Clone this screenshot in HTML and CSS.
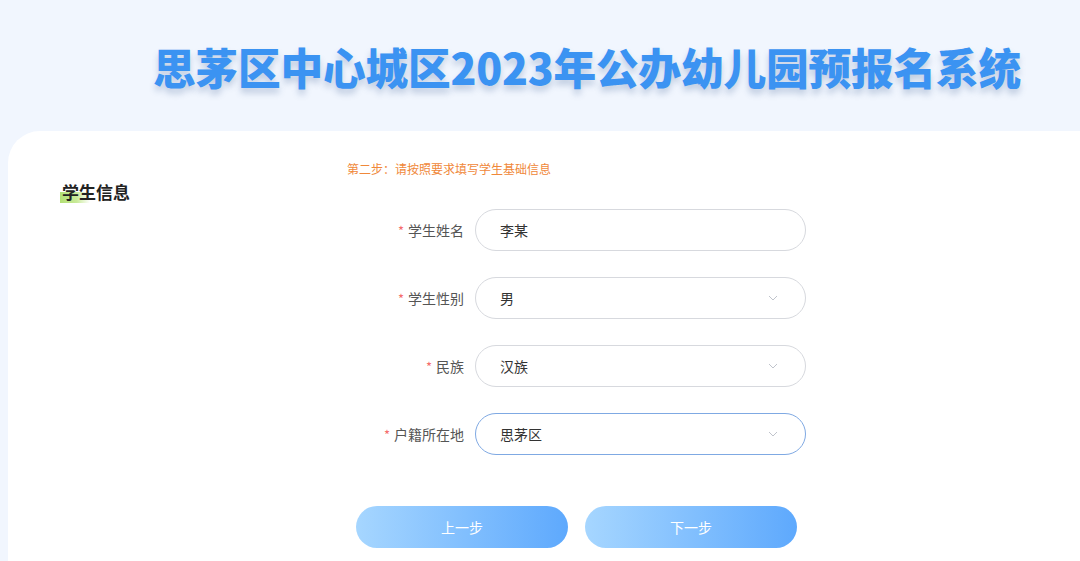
FILE: index.html
```html
<!DOCTYPE html>
<html lang="zh-CN">
<head>
<meta charset="utf-8">
<title>思茅区中心城区2023年公办幼儿园预报名系统</title>
<link rel="stylesheet" href="styles.css">
</head>
<body>
<div class="page">
  <header class="header">
    <h1 class="title">思茅区中心城区2023年公办幼儿园预报名系统</h1>
  </header>
  <main class="card">
    <aside class="aside">
      <h2 class="section-title"><span class="mark">学生</span>信息</h2>
    </aside>
    <section class="form">
      <p class="hint">第二步：请按照要求填写学生基础信息</p>
      <div class="row">
        <label class="label"><span class="req">*</span>学生姓名</label>
        <div class="field"><span class="value">李某</span></div>
      </div>
      <div class="row">
        <label class="label"><span class="req">*</span>学生性别</label>
        <div class="field"><span class="value">男</span>
          <svg class="arrow" width="10" height="6" viewBox="0 0 10 6"><path d="M1 1 L5 5 L9 1" fill="none" stroke="#c0c4cc" stroke-width="1"/></svg>
        </div>
      </div>
      <div class="row">
        <label class="label"><span class="req">*</span>民族</label>
        <div class="field"><span class="value">汉族</span>
          <svg class="arrow" width="10" height="6" viewBox="0 0 10 6"><path d="M1 1 L5 5 L9 1" fill="none" stroke="#c0c4cc" stroke-width="1"/></svg>
        </div>
      </div>
      <div class="row">
        <label class="label"><span class="req">*</span>户籍所在地</label>
        <div class="field focus"><span class="value">思茅区</span>
          <svg class="arrow" width="10" height="6" viewBox="0 0 10 6"><path d="M1 1 L5 5 L9 1" fill="none" stroke="#c0c4cc" stroke-width="1"/></svg>
        </div>
      </div>
      <div class="buttons">
        <button class="btn">上一步</button>
        <button class="btn">下一步</button>
      </div>
    </section>
  </main>
</div>
</body>
</html>
```

FILE: styles.css
```css
* { box-sizing: border-box; }
html, body {
  margin: 0;
  padding: 0;
  height: 100%;
  overflow: hidden;
}
body {
  background: #f1f6fe;
  font-family: "Noto Sans CJK SC", "Noto Sans", sans-serif;
  color: #333;
}
.page {
  position: relative;
  height: 561px;
  display: flex;
  flex-direction: column;
}
.page::before {
  content: "";
  position: absolute;
  left: -180px;
  top: -200px;
  width: 206px;
  height: 206px;
  border-radius: 50%;
  background: linear-gradient(90deg, #e6effc, #c4dbf8);
}
.header {
  height: 131px;
  display: flex;
  align-items: center;
  padding-left: 153px;
  padding-top: 2px;
}
.title {
  margin: 0;
  font-size: 42.7px;
  font-weight: 900;
  color: #3b93f2;
  letter-spacing: -0.2px;
  text-shadow: 0 5px 6px rgba(70, 100, 150, 0.28);
  line-height: 1;
  white-space: nowrap;
}
.card {
  flex: 1;
  margin-left: 8px;
  background: #fff;
  border-top-left-radius: 32px;
  display: flex;
  padding-top: 30px;
}
.aside {
  width: 339px;
  padding-left: 54px;
  padding-top: 21px;
}
.section-title {
  margin: 0;
  font-size: 17px;
  line-height: 20px;
  font-weight: 700;
  color: #222;
}
.mark {
  position: relative;
  display: inline-block;
  z-index: 0;
}
.mark::after {
  content: "";
  position: absolute;
  z-index: -1;
  left: -2px;
  bottom: -1px;
  width: 30px;
  height: 11px;
  background: linear-gradient(90deg, #b2df74 0%, #c8ea98 55%, rgba(220, 244, 185, 0) 100%);
}
.form {
  width: 460px;
}
.hint {
  margin: 0 0 32px;
  font-size: 12px;
  line-height: 16px;
  color: #f0883a;
}
.row {
  display: flex;
  align-items: center;
  margin-bottom: 26px;
}
.label {
  width: 117px;
  text-align: right;
  font-size: 14px;
  color: #555;
  margin-right: 11px;
}
.req {
  color: #f56c6c;
  margin-right: 4px;
  font-size: 13px;
}
.field {
  width: 331px;
  height: 42px;
  border: 1px solid #d7d9de;
  border-radius: 21px;
  display: flex;
  align-items: center;
  justify-content: space-between;
  padding: 0 27px 0 24px;
  font-size: 14px;
  color: #333;
}
.field.focus {
  border-color: #7fa9e3;
}
.arrow {
  display: block;
}
.buttons {
  display: flex;
  gap: 17px;
  padding-left: 9px;
  margin-top: 51px;
}
.btn {
  width: 212px;
  height: 42px;
  border: none;
  border-radius: 21px;
  background: linear-gradient(90deg, #a6d6ff, #5ea9fd);
  color: #fff;
  font-family: "Noto Sans CJK SC", sans-serif;
  font-size: 14px;
  cursor: pointer;
}
```
